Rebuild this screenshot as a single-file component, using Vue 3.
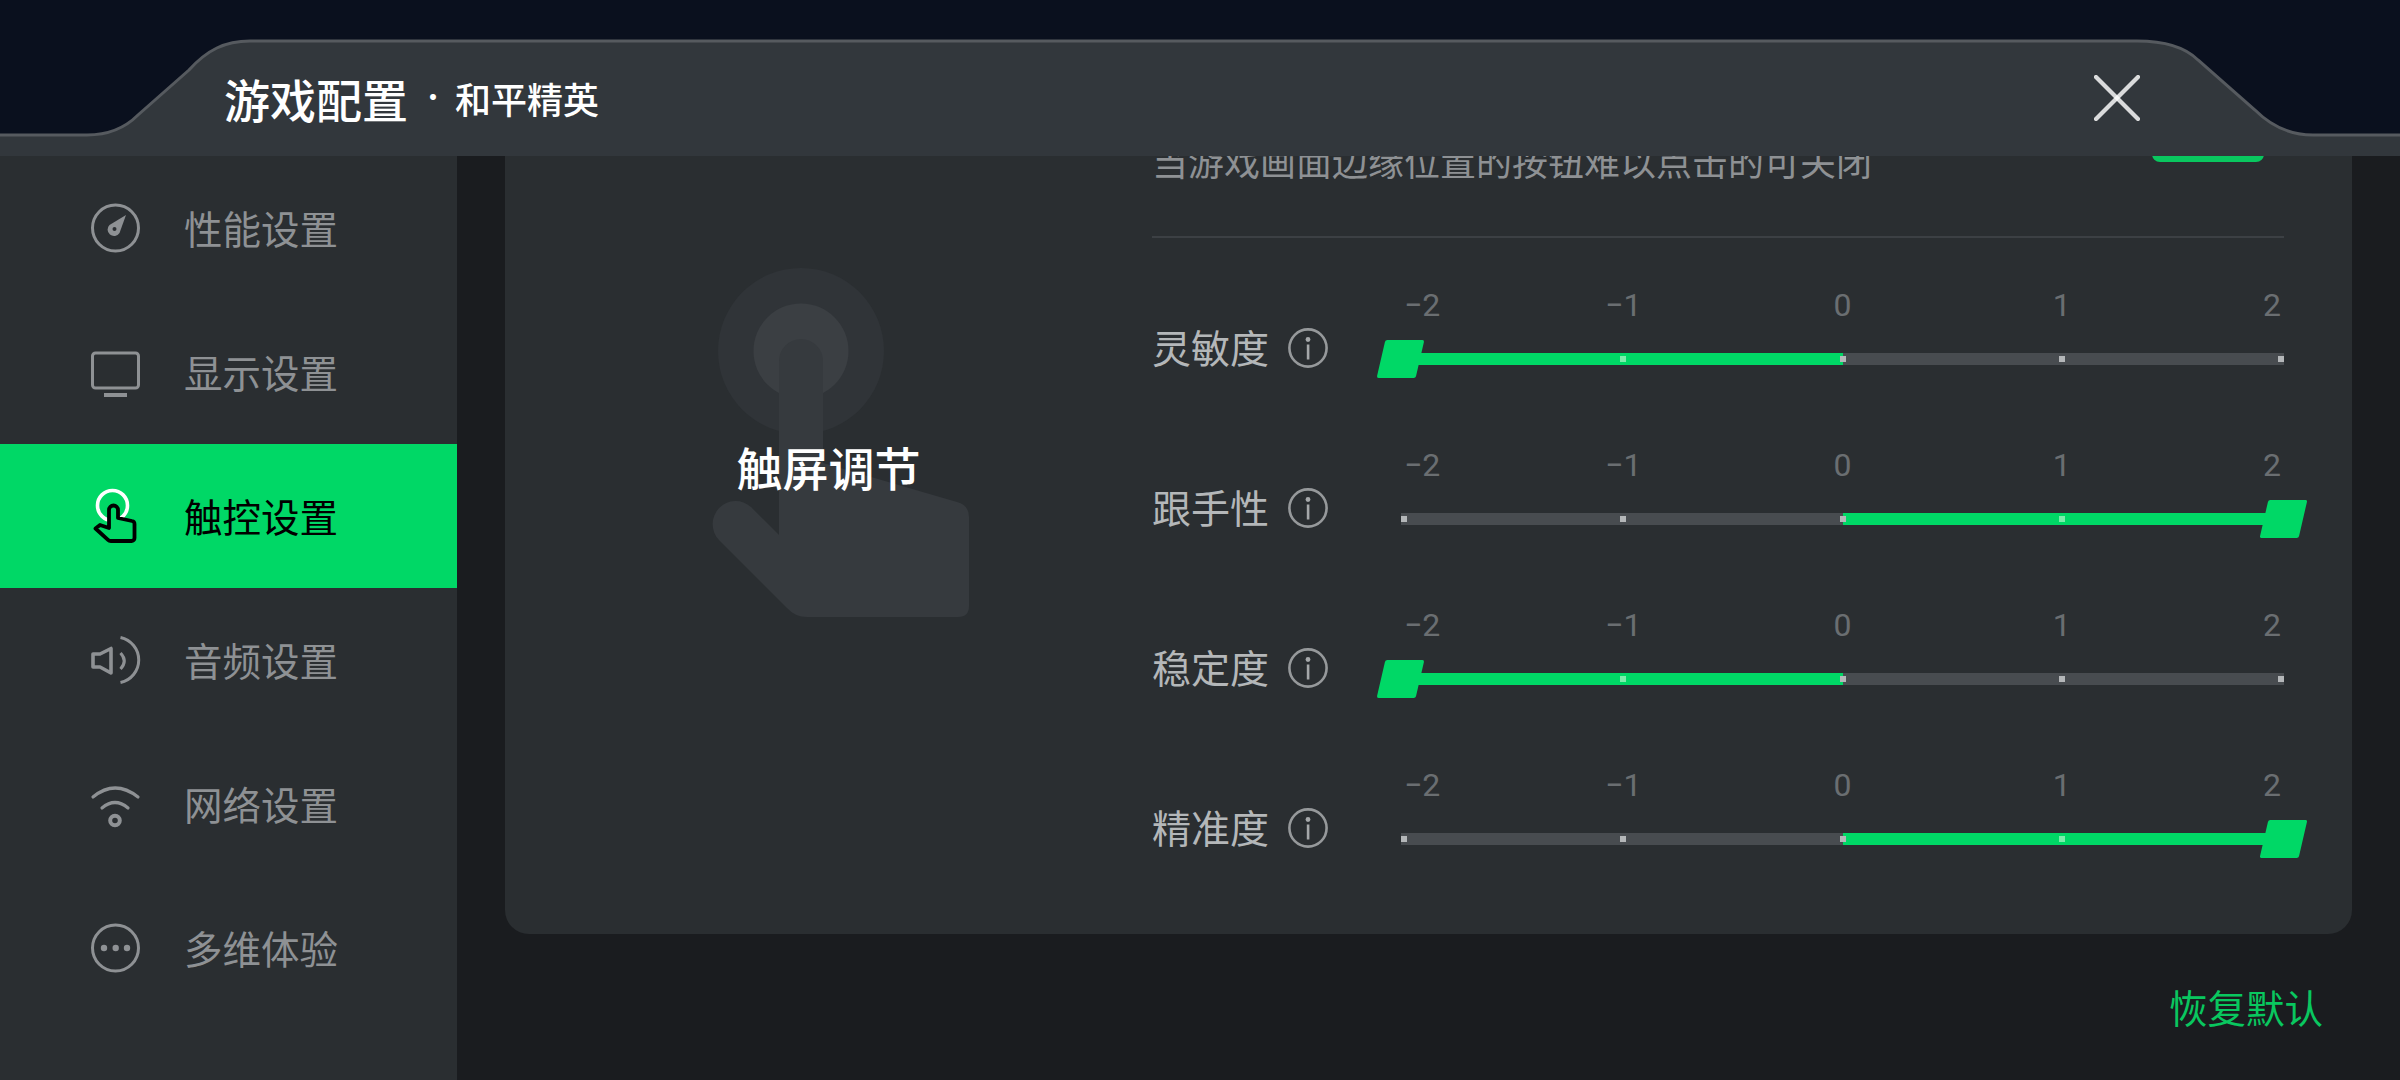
<script setup>
const menu = [
  { key: 'perf', name: '性能设置' },
  { key: 'display', name: '显示设置' },
  { key: 'touch', name: '触控设置', active: true },
  { key: 'audio', name: '音频设置' },
  { key: 'network', name: '网络设置' },
  { key: 'more', name: '多维体验' }
]

const scale = ['−2', '−1', '0', '1', '2']

const sliders = [
  { name: '灵敏度', value: -2 },
  { name: '跟手性', value: 2 },
  { name: '稳定度', value: -2 },
  { name: '精准度', value: 2 }
]

function fillStyle(value) {
  return value < 0
    ? { left: '0%', width: ((0 - value) / 4) * 100 + '%' }
    : { left: '50%', width: (value / 4) * 100 + '%' }
}

function thumbLeft(value) {
  return ((value + 2) / 4) * 100 + '%'
}

// the tick sits on the green part of the track
function tickOn(value, index) {
  const tick = index - 2
  return value < 0 ? tick < 0 && tick >= value : tick > 0 && tick <= value
}
</script>

<template>
  <div class="page">
    <header class="topbar">
      <svg class="tab" width="2400" height="156" viewBox="0 0 2400 156">
        <path
          d="M0 135 H87 C108 135 125 128 138 115 L189 70 C207 50 225 41 250 41 H2137 C2165 41 2185 47 2198 60 L2255 110 C2272 127 2290 135 2313 135 H2400 V156 H0 Z"
          fill="#32373c"
        />
        <path
          d="M0 135 H87 C108 135 125 128 138 115 L189 70 C207 50 225 41 250 41 H2137 C2165 41 2185 47 2198 60 L2255 110 C2272 127 2290 135 2313 135 H2400"
          fill="none"
          stroke="#565a5f"
          stroke-width="3"
        />
      </svg>
      <div class="title">游戏配置</div>
      <div class="dot">·</div>
      <div class="subtitle">和平精英</div>
      <button class="close">
        <svg width="46" height="46" viewBox="0 0 46 46">
          <path d="M2 2 L44 44" stroke="rgba(255,255,255,.82)" stroke-width="4.2" stroke-linecap="round" />
          <path d="M44 2 L2 44" stroke="rgba(255,255,255,.82)" stroke-width="4.2" stroke-linecap="round" />
        </svg>
      </button>
    </header>

    <div class="body">
      <aside class="sidebar">
        <div v-for="item in menu" :key="item.key" class="menu-item" :class="{ active: item.active }">
          <svg class="menu-icon" width="48" height="48" viewBox="0 0 48 48">
            <g v-if="item.key === 'perf'">
              <circle cx="24.5" cy="24" r="23" fill="none" stroke="#8e9194" stroke-width="3" />
              <path d="M35 11 L18.5 20.9 A6.5 6.5 0 1 0 28.5 29.1 Z" fill="#8e9194" />
              <circle cx="23.5" cy="25" r="2" fill="#2a2e31" />
            </g>
            <g v-else-if="item.key === 'display'">
              <rect x="1.5" y="5" width="46" height="35" rx="3" fill="none" stroke="#8e9194" stroke-width="3" />
              <rect x="13" y="45" width="23" height="4" fill="#8e9194" />
            </g>
            <g v-else-if="item.key === 'touch'">
              <circle cx="21.5" cy="13.5" r="15" fill="none" stroke="#fff" stroke-width="3.6" />
              <path
                d="M18 36 V18 a4.5 4.5 0 0 1 9 0 V26 L41 29 a3 3 0 0 1 2.5 3 V46 a3 3 0 0 1 -3 3 H20 a4 4 0 0 1 -3 -1.2 L4.5 36.5 L9 33 Z"
                fill="#00d866"
                stroke="#000"
                stroke-width="3.8"
                stroke-linejoin="round"
              />
            </g>
            <g v-else-if="item.key === 'audio'" fill="none" stroke="#8e9194" stroke-width="3">
              <path d="M2 18 H9 L20 12.5 V37 L9 31 H2 Z" stroke-width="3.6" stroke-linejoin="round" />
              <path d="M29.5 17 Q37 25 29.5 33" />
              <path d="M29.5 1.5 A23 23 0 0 1 29.5 46.5" />
            </g>
            <g v-else-if="item.key === 'network'" fill="none" stroke="#8e9194" stroke-width="3.2" stroke-linecap="round">
              <path d="M2 17 Q24 -1 47 17" />
              <path d="M11 28 Q24 17 37 28" />
              <circle cx="24" cy="40.5" r="4.8" stroke-width="4" />
            </g>
            <g v-else>
              <circle cx="24.5" cy="24" r="23" fill="none" stroke="#8e9194" stroke-width="3" />
              <circle cx="13" cy="24" r="3.2" fill="#8e9194" />
              <circle cx="24.7" cy="24" r="3.2" fill="#8e9194" />
              <circle cx="36" cy="24" r="3.2" fill="#8e9194" />
            </g>
          </svg>
          <span class="menu-name">{{ item.name }}</span>
        </div>
      </aside>

      <main class="main">
        <section class="card">
          <div class="left-panel">
            <svg class="hand" width="260" height="352" viewBox="711 266 260 352">
              <circle cx="801" cy="351" r="83" fill="#303438" />
              <circle cx="801" cy="351" r="47.5" fill="#3b3f43" />
              <path
                d="M779 361 a22 22 0 0 1 44 0 V463 L957 502 Q969 505 969 517 V606 Q969 617 958 617 H807 Q795 617 787 608 L719 540 A23 23 0 0 1 751 507 L779 535 Z"
                fill="#363a3e"
              />
            </svg>
            <div class="panel-title">触屏调节</div>
          </div>

          <div class="right-panel">
            <div class="desc-row">
              <span class="desc">当游戏画面边缘位置的按钮难以点击的可关闭</span>
              <span class="toggle"></span>
            </div>
            <div class="divider"></div>

            <div class="sliders">
              <div v-for="s in sliders" :key="s.name" class="slider-row">
                <div class="slider-head">
                  <span class="slider-name">{{ s.name }}</span>
                  <svg width="40" height="40" viewBox="0 0 40 40">
                    <circle cx="20" cy="20" r="18.6" fill="none" stroke="#96999b" stroke-width="2.6" />
                    <circle cx="20" cy="11.5" r="2.4" fill="#a5a8aa" />
                    <rect x="18.8" y="16.5" width="2.6" height="15" fill="#a5a8aa" />
                  </svg>
                </div>
                <div class="slider">
                  <div class="scale">
                    <div v-for="n in scale" :key="n" class="scale-item"><span>{{ n }}</span></div>
                  </div>
                  <div class="track">
                    <div class="fill" :style="fillStyle(s.value)"></div>
                    <div class="ticks">
                      <i v-for="(n, i) in scale" :key="n" class="tick" :class="{ on: tickOn(s.value, i) }"></i>
                    </div>
                    <div class="thumb" :style="{ left: thumbLeft(s.value) }"></div>
                  </div>
                </div>
              </div>
            </div>
          </div>
        </section>

        <div class="reset">恢复默认</div>
      </main>
    </div>
  </div>
</template>

<style>
body {
  margin: 0;
  background: #1a1c1f;
}
</style>

<style scoped>
.page {
  width: 2400px;
  height: 1080px;
  display: flex;
  flex-direction: column;
  overflow: hidden;
  background: #1a1c1f;
  font-family: "Noto Sans CJK SC", "Noto Sans", sans-serif;
}

.topbar {
  position: relative;
  flex: none;
  height: 156px;
  box-sizing: border-box;
  padding: 44px 260px 0 224px;
  display: flex;
  align-items: center;
  background: #0a101e;
  color: #fff;
}

.tab {
  position: absolute;
  left: 0;
  top: 0;
}

.title {
  position: relative;
  margin-bottom: 5px;
  font-size: 46px;
  font-weight: 500;
  line-height: 60px;
}

.dot {
  position: relative;
  margin: 0 0 8px 11px;
  width: 36px;
  font-size: 28px;
  line-height: 40px;
  font-weight: 400;
}

.subtitle {
  position: relative;
  margin-bottom: 5px;
  font-size: 36px;
  font-weight: 500;
  line-height: 60px;
}

.close {
  position: relative;
  margin: 0 0 4px auto;
  padding: 0;
  border: none;
  background: none;
  display: flex;
}

.body {
  flex: 1;
  display: flex;
  min-height: 0;
}

.sidebar {
  flex: none;
  width: 457px;
  background: #2a2e31;
}

.menu-item {
  height: 144px;
  box-sizing: border-box;
  padding-left: 91px;
  display: flex;
  align-items: center;
  color: #8e9194;
}

.menu-item.active {
  background: #00d866;
  color: #000;
}

.menu-icon {
  overflow: visible;
  flex: none;
}

.menu-name {
  margin: 0 0 3px 45px;
  font-size: 38.5px;
  line-height: 50px;
}

.main {
  flex: 1;
  min-width: 0;
  padding: 0 48px;
  overflow: hidden;
}

.card {
  display: flex;
  margin-top: -60px;
  background: #2a2e31;
  border-radius: 24px;
}

.left-panel {
  position: relative;
  flex: none;
  width: 647px;
}

.hand {
  position: absolute;
  left: 206px;
  top: 170px;
}

.panel-title {
  position: relative;
  padding-top: 340px;
  text-align: center;
  font-size: 46px;
  line-height: 60px;
  font-weight: 500;
  color: #fff;
}

.right-panel {
  flex: none;
  width: 1132px;
  padding-top: 39px;
  padding-bottom: 23px;
}

.desc-row {
  display: flex;
  justify-content: space-between;
  align-items: flex-start;
  padding-right: 20px;
  height: 50px;
}

.desc {
  font-size: 36px;
  line-height: 50px;
  color: #8e9194;
}

.toggle {
  width: 112px;
  height: 27px;
  background: #09c75f;
  border-radius: 0 0 8px 8px;
}

.divider {
  margin-top: 51px;
  height: 2px;
  background: #3c4044;
}

.sliders {
  margin-top: 33px;
}

.slider-row {
  display: flex;
  height: 160px;
}

.slider-head {
  flex: none;
  width: 249px;
  margin-top: 52px;
  height: 50px;
  display: flex;
  align-items: center;
  gap: 19px;
}

.slider-name {
  margin-bottom: 5px;
  font-size: 39px;
  line-height: 50px;
  color: #b4b7b9;
}

.slider {
  flex: 1;
  padding-top: 14px;
}

.scale {
  display: flex;
  justify-content: space-between;
  padding: 0 3px;
  height: 40px;
  font-family: Roboto, sans-serif;
  font-size: 32px;
  line-height: 40px;
  color: #6a6e71;
}

.scale-item {
  width: 0;
  display: flex;
  justify-content: center;
  white-space: nowrap;
}

.scale-item:first-child {
  justify-content: flex-start;
}

.scale-item:last-child {
  justify-content: flex-end;
}

.track {
  position: relative;
  margin-top: 28px;
  height: 12px;
  background: #484c50;
}

.fill {
  position: absolute;
  top: 0;
  bottom: 0;
  background: #00d866;
}

.ticks {
  position: absolute;
  left: 0;
  right: 0;
  top: 3px;
  display: flex;
  justify-content: space-between;
}

.tick {
  width: 6px;
  height: 6px;
  background: #b4b7b9;
}

.tick.on {
  background: #7cedab;
}

.thumb {
  position: absolute;
  top: -13px;
  width: 39px;
  height: 38px;
  margin-left: -20px;
  background: #00d866;
  border-radius: 2px;
  transform: skewX(-13deg);
}

.reset {
  margin-top: 47px;
  padding-right: 29px;
  text-align: right;
  font-size: 38.5px;
  line-height: 50px;
  color: #09c75f;
}
</style>
